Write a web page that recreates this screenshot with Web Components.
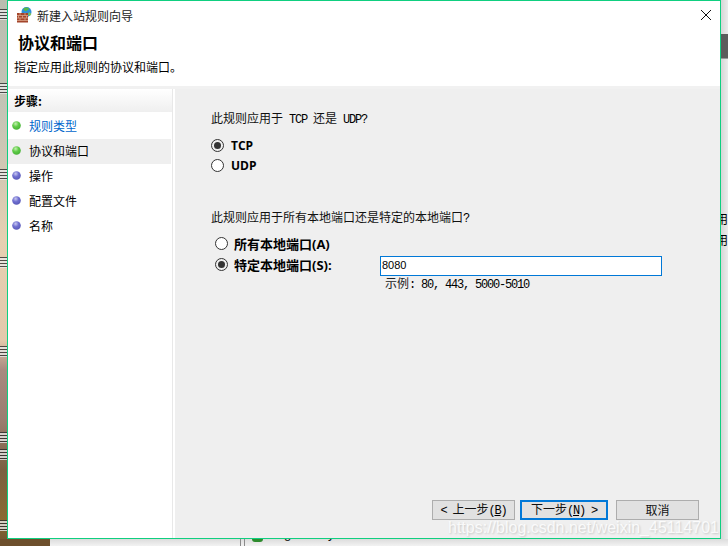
<!DOCTYPE html>
<html lang="zh">
<head>
<meta charset="utf-8">
<title>新建入站规则向导</title>
<style>
html, body { margin: 0; height: 100%; overflow: hidden; }
body { font: 12px "Noto Sans CJK SC", "Liberation Sans", sans-serif; color: #000; }
</style>
</head>
<body>
<desktop-backdrop>
    <wizard-window>
        <wizard-step slot="steps" state="done" link>规则类型</wizard-step>
        <wizard-step slot="steps" state="done" current>协议和端口</wizard-step>
        <wizard-step slot="steps">操作</wizard-step>
        <wizard-step slot="steps">配置文件</wizard-step>
        <wizard-step slot="steps">名称</wizard-step>

        <rule-question>此规则应用于<tt-text> TCP </tt-text>还是<tt-text> UDP?</tt-text></rule-question>
        <div style="display:flex;flex-direction:column;gap:6px;margin-top:12px">
            <radio-option checked>TCP</radio-option>
            <radio-option>UDP</radio-option>
        </div>
        <rule-question style="margin-top:37px">此规则应用于所有本地端口还是特定的本地端口<tt-text>?</tt-text></rule-question>
        <port-form></port-form>
    </wizard-window>
    <csdn-mark>https://blog.csdn.net/weixin_45114701</csdn-mark>
</desktop-backdrop>

<script>
class DesktopBackdrop extends HTMLElement {
    constructor() {
        super()
        this.attachShadow({ mode: 'open' })
        this.shadowRoot.innerHTML = `
            <style>
                :host {
                    display: block;
                    position: relative;
                    width: 728px;
                    height: 546px;
                    overflow: hidden;
                    background: #e2e2e2;
                }
                .wall {
                    position: absolute;
                    left: 0;
                    top: 0;
                    width: 8px;
                    height: 546px;
                    background: linear-gradient(#b9bdb0 0, #c4c4b6 110px, #d2c8b4 170px, #e6d0b2 240px, #e3c9ac 340px, #a88a80 370px, #9a7d70 420px, #7a5f40 470px, #8a6a30 520px, #6d5130 546px);
                }
                .wall i {
                    position: absolute;
                    left: 0;
                    width: 7px;
                    height: 11px;
                    background: repeating-linear-gradient(#2a2a2a 0 1px, #e8e8e8 1px 3px);
                    opacity: .8;
                }
                .floor {
                    position: absolute;
                    left: 0;
                    top: 539px;
                    width: 728px;
                    height: 7px;
                    background: linear-gradient(#dcdcdc, #f2f2f2);
                    overflow: hidden;
                }
                .floor .brown {
                    position: absolute;
                    left: 0;
                    top: 0;
                    width: 50px;
                    height: 7px;
                    background: #6d4f2c;
                }
                .floor .line {
                    position: absolute;
                    top: 0;
                    width: 1px;
                    height: 7px;
                    background: #8a8a8a;
                }
                .floor .svc {
                    position: absolute;
                    left: 268px;
                    top: -13px;
                    font: 13px/16px "Liberation Sans", sans-serif;
                    color: #111;
                }
                .floor .led {
                    position: absolute;
                    left: 252px;
                    top: 0;
                    width: 11px;
                    height: 3px;
                    background: #2e8b2e;
                    border-radius: 0 0 6px 6px;
                }
                .strip {
                    position: absolute;
                    left: 721px;
                    top: 0;
                    width: 7px;
                    height: 539px;
                    background: linear-gradient(90deg, #d6d6d6, #ececec);
                    overflow: hidden;
                }
                .strip .tab {
                    position: absolute;
                    left: 0;
                    top: 34px;
                    width: 7px;
                    height: 24px;
                    background: #5c5c5c;
                    border-bottom: 1px solid #999;
                }
                .strip span {
                    position: absolute;
                    left: -5px;
                    font-size: 12px;
                    line-height: 14px;
                }
            </style>
            <div class="wall">
                <i style="top:9px"></i>
                <i style="top:83px"></i>
                <i style="top:169px"></i>
                <i style="top:257px"></i>
                <i style="top:346px"></i>
                <i style="top:432px"></i>
                <i style="top:449px"></i>
                <i style="top:520px"></i>
            </div>
            <div class="strip">
                <div class="tab"></div>
                <span style="top:212px">用</span>
                <span style="top:233px">用</span>
            </div>
            <div class="floor">
                <div class="brown"></div>
                <div class="line" style="left:240px"></div>
                <div class="line" style="left:244px"></div>
                <div class="led"></div>
                <div class="svc">Sogou Pinyin Service</div>
            </div>
            <slot></slot>
        `
    }
}

class WizardWindow extends HTMLElement {
    constructor() {
        super()
        this.attachShadow({ mode: 'open' })
        this.shadowRoot.innerHTML = `
            <style>
                :host {
                    position: absolute;
                    left: 7px;
                    top: 0;
                    width: 712px;
                    height: 537px;
                    display: flex;
                    flex-direction: column;
                    background: #fff;
                    border: 1px solid #0fcf80;
                }
                .titlebar {
                    display: flex;
                    align-items: center;
                    height: 28px;
                    padding-left: 9px;
                    gap: 4px;
                    flex: none;
                }
                .titlebar svg { flex: none; }
                .titlebar .name { flex: 1; font-size: 12px; color: #222; }
                .close { width: 12px; height: 12px; margin-right: 8px; }
                .head { flex: none; height: 57px; box-sizing: border-box; padding-left: 6px; }
                h1 {
                    margin: 2px 0 0 4px;
                    font-size: 16px;
                    line-height: 22px;
                    font-weight: 700;
                }
                p { margin: 5px 0 0; font-size: 12px; line-height: 18px; }
                .rule { flex: none; height: 3px; background: #f1f1f1; }
                .body { flex: 1; display: flex; min-height: 0; }
                .side {
                    flex: none;
                    width: 164px;
                    border-right: 1px solid #e8e8e8;
                }
                .side h2 {
                    margin: 0;
                    height: 23px;
                    line-height: 23px;
                    padding-left: 6px;
                    font-size: 12px;
                    font-weight: 700;
                    background: linear-gradient(#fff, #efefef);
                }
                .steps { display: flex; flex-direction: column; padding-top: 2px; }
                .main {
                    flex: 1;
                    margin-left: 2px;
                    background: #efefef;
                    display: flex;
                    flex-direction: column;
                }
                .content { flex: 1; padding: 21px 0 0 36px; }
                .buttons {
                    display: flex;
                    justify-content: flex-end;
                    align-items: center;
                    padding: 0 21px 18px 0;
                }
            </style>
            <div class="titlebar">
                <svg width="16" height="16" viewBox="0 0 16 16">
                    <circle cx="9.500" cy="5" r="5" fill="#2f8fd8"/>
                    <path d="M6.500 1.200c2-1.200 4.800-.8 5.800.6-.8 1.500-2.300 1-3 2.400-1.200.3-2.800-1-2.800-3z" fill="#58b947"/>
                    <path d="M12 5c1 .5 2 1.500 2.200 2.700L12.500 9l-1.500-1.500z" fill="#7cc65a"/>
                    <rect x="0" y="6" width="11" height="9.500" fill="#a3452b"/>
                    <path d="M0 8.500h11M0 11h11M0 13.500h11M3 6v2.500M8 6v2.500M5.500 8.500V11M1.500 8.500V11M9.500 8.500V11M3 11v2.500M8 11v2.500" stroke="#dba48a" stroke-width=".8" fill="none"/>
                </svg>
                <span class="name">新建入站规则向导</span>
                <svg class="close" viewBox="0 0 12 12"><path d="M1 1l10 10M11 1 1 11" stroke="#111" stroke-width="1" fill="none"/></svg>
            </div>
            <div class="head">
                <h1>协议和端口</h1>
                <p>指定应用此规则的协议和端口。</p>
            </div>
            <div class="rule"></div>
            <div class="body">
                <div class="side">
                    <h2>步骤:</h2>
                    <div class="steps"><slot name="steps"></slot></div>
                </div>
                <div class="main">
                    <div class="content"><slot></slot></div>
                    <div class="buttons">
                        <wizard-button><tt-text>&lt; </tt-text>上一步<tt-text>(<u>B</u>)</tt-text></wizard-button>
                        <wizard-button primary style="margin-left:5px">下一步<tt-text>(<u>N</u>) &gt;</tt-text></wizard-button>
                        <wizard-button style="margin-left:8px">取消</wizard-button>
                    </div>
                </div>
            </div>
        `
    }
}

class WizardStep extends HTMLElement {
    constructor() {
        super()
        this.attachShadow({ mode: 'open' })
        const green = this.getAttribute('state') === 'done'
        const id = green ? 'g' : 'b'
        this.shadowRoot.innerHTML = `
            <style>
                :host {
                    display: flex;
                    align-items: center;
                    height: 25px;
                    width: 163px;
                    gap: 8px;
                    padding: 0 0 2px 4px;
                    box-sizing: border-box;
                    font-size: 12px;
                }
                :host([current]) { background: #efefef; }
                :host([link]) { color: #0066cc; }
                svg { flex: none; }
            </style>
            <svg width="9" height="9" viewBox="0 0 9 9">
                <defs>
                    <radialGradient id="${id}" cx=".4" cy=".3" r=".7">
                        <stop offset="0" stop-color="${green ? '#c4f0b0' : '#c8c8f0'}"/>
                        <stop offset=".5" stop-color="${green ? '#5ecb46' : '#6f6fd0'}"/>
                        <stop offset="1" stop-color="${green ? '#48b238' : '#5a5ab8'}"/>
                    </radialGradient>
                </defs>
                <circle cx="4.500" cy="4.500" r="4.300" fill="url(#${id})"/>
            </svg>
            <slot></slot>
        `
    }
}

class RuleQuestion extends HTMLElement {
    constructor() {
        super()
        this.attachShadow({ mode: 'open' })
        this.shadowRoot.innerHTML = `<style>
                :host { display: block; height: 16px; font-size: 12px; line-height: 16px; color: #111; }
            </style><slot></slot>`
    }
}

class TtText extends HTMLElement {
    constructor() {
        super()
        this.attachShadow({ mode: 'open' })
        // no whitespace round the slot: this host is inline and it would show
        this.shadowRoot.innerHTML = `<style>
                :host {
                    display: inline;
                    font-family: "Liberation Mono", monospace;
                    font-size: 12px;
                    letter-spacing: -1.2px;
                    color: #000;
                }
                slot { white-space: pre; }
            </style><slot></slot>`
    }
}

class RadioOption extends HTMLElement {
    constructor() {
        super()
        this.attachShadow({ mode: 'open' })
        this.shadowRoot.innerHTML = `
            <style>
                :host {
                    display: flex;
                    align-items: center;
                    height: 14px;
                    gap: var(--radio-gap, 7px);
                    font-family: "Open Sans", "Noto Sans CJK SC", sans-serif;
                    font-size: var(--radio-size, 12px);
                    font-weight: 700;
                    white-space: nowrap;
                }
                .dot {
                    flex: none;
                    width: 13px;
                    height: 13px;
                    box-sizing: border-box;
                    border: 1px solid #333;
                    border-radius: 50%;
                    background: #fff;
                    display: flex;
                    align-items: center;
                    justify-content: center;
                }
                :host([checked]) .dot { background: #efefef; }
                :host([checked]) .dot::after {
                    content: "";
                    width: 7px;
                    height: 7px;
                    border-radius: 50%;
                    background: #333;
                }
            </style>
            <span class="dot"></span>
            <slot></slot>
        `
    }
}

class PortForm extends HTMLElement {
    constructor() {
        super()
        this.attachShadow({ mode: 'open' })
        this.shadowRoot.innerHTML = `
            <style>
                :host {
                    display: grid;
                    grid-template-columns: 165px 282px;
                    grid-auto-rows: auto;
                    margin: 11px 0 0 4px;
                    --radio-gap: 6px;
                    --radio-size: 13px;
                }
                .all { grid-column: 1 / 3; height: 20px; }
                .pick { padding-top: 1px; }
                .field {
                    box-sizing: border-box;
                    height: 20px;
                    border: 1px solid #0078d7;
                    background: #fff;
                    padding-left: 1px;
                    font: 11px/16px "Liberation Sans", sans-serif;
                }
                .hint {
                    grid-column: 2;
                    padding-left: 5px;
                    font-size: 12px;
                    line-height: 13px;
                    color: #222;
                }
            </style>
            <div class="all"><radio-option>所有本地端口(A)</radio-option></div>
            <div class="pick"><radio-option checked>特定本地端口(S):</radio-option></div>
            <div class="field">8080</div>
            <div class="hint">示例<tt-text>: 80, 443, 5000-5010</tt-text></div>
        `
    }
}

class WizardButton extends HTMLElement {
    constructor() {
        super()
        this.attachShadow({ mode: 'open' })
        this.shadowRoot.innerHTML = `
            <style>
                :host {
                    display: flex;
                    align-items: center;
                    justify-content: center;
                    box-sizing: border-box;
                    width: 83px;
                    height: 20px;
                    background: #e1e1e1;
                    border: 1px solid #adadad;
                    font-size: 12px;
                    color: #111;
                }
                :host([primary]) { width: 88px; border: 2px solid #0078d7; }
                span { display: block; line-height: 16px; white-space: nowrap; }
            </style>
            <span><slot></slot></span>
        `
    }
}

class CsdnMark extends HTMLElement {
    constructor() {
        super()
        this.attachShadow({ mode: 'open' })
        this.shadowRoot.innerHTML = `
            <style>
                :host {
                    position: absolute;
                    left: 448px;
                    top: 518px;
                    font: 16px/20px "Liberation Sans", sans-serif;
                    color: rgba(255, 255, 255, .85);
                    text-shadow: 1px 1px 2px rgba(0, 0, 0, .16);
                    white-space: nowrap;
                }
            </style>
            <slot></slot>
        `
    }
}

customElements.define('desktop-backdrop', DesktopBackdrop)
customElements.define('wizard-window', WizardWindow)
customElements.define('wizard-step', WizardStep)
customElements.define('rule-question', RuleQuestion)
customElements.define('tt-text', TtText)
customElements.define('radio-option', RadioOption)
customElements.define('port-form', PortForm)
customElements.define('wizard-button', WizardButton)
customElements.define('csdn-mark', CsdnMark)
</script>
</body>
</html>
